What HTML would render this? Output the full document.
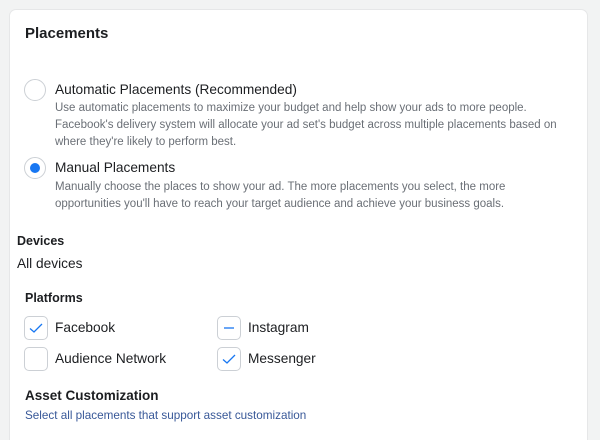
<!DOCTYPE html>
<html><head><style>
*{margin:0;padding:0;box-sizing:border-box}
html,body{width:600px;height:440px;overflow:hidden}
body{background:#f2f3f3;font-family:"Liberation Sans",sans-serif;position:relative;color:#1c1e21}
.card{position:absolute;left:9px;top:9px;width:579px;height:431px;background:#fff;border-radius:7px 7px 0 0;border:1px solid #e6e7e8;border-bottom:none}
.a{position:absolute;white-space:nowrap}
.t{font-weight:bold}
.d{font-size:11.5px;color:#6a6f76;line-height:17px}
.r{position:absolute;width:22px;height:22px;border-radius:50%;border:1px solid #ccd0d5;background:#fff}
.cb{position:absolute;width:24px;height:24px;border-radius:5px;border:1px solid #ccd0d5;background:#fff}
.cb svg{position:absolute;left:4px;top:4px}
.l{font-size:13.7px;line-height:16px}
</style></head><body>
<div class="card"></div>
<div class="a t" style="left:25px;top:25px;font-size:15px">Placements</div>
<div class="r" style="left:24px;top:79px"></div>
<div class="a l" style="left:55px;top:82px">Automatic Placements (Recommended)</div>
<div class="a d" style="left:55px;top:100px">Use automatic placements to maximize your budget and help show your ads to more people.<br>Facebook's delivery system will allocate your ad set's budget across multiple placements based on<br>where they're likely to perform best.</div>
<div class="r" style="left:24px;top:157px"><div style="position:absolute;left:5px;top:5px;width:10px;height:10px;border-radius:50%;background:#1877f2"></div></div>
<div class="a l" style="left:55px;top:160px">Manual Placements</div>
<div class="a d" style="left:55px;top:179px">Manually choose the places to show your ad. The more placements you select, the more<br>opportunities you'll have to reach your target audience and achieve your business goals.</div>
<div class="a t" style="left:17px;top:234px;font-size:12.5px">Devices</div>
<div class="a" style="left:17px;top:256px;font-size:13.7px">All devices</div>
<div class="a t" style="left:25px;top:291px;font-size:12.5px">Platforms</div>
<div class="cb" style="left:24px;top:316px"><svg width="14" height="14"><path d="M1 7.5 L5 11 L13 3" stroke="#1877f2" stroke-width="1.3" fill="none"/></svg></div>
<div class="a l" style="left:55px;top:320px">Facebook</div>
<div class="cb" style="left:24px;top:347px"></div>
<div class="a l" style="left:55px;top:351px">Audience Network</div>
<div class="cb" style="left:217px;top:316px"><svg width="14" height="14"><path d="M2 7 H12" stroke="#1877f2" stroke-width="1.3"/></svg></div>
<div class="a l" style="left:248px;top:320px">Instagram</div>
<div class="cb" style="left:217px;top:347px"><svg width="14" height="14"><path d="M1 7.5 L5 11 L13 3" stroke="#1877f2" stroke-width="1.3" fill="none"/></svg></div>
<div class="a l" style="left:248px;top:351px">Messenger</div>
<div class="a t" style="left:25px;top:388px;font-size:13.5px">Asset Customization</div>
<div class="a" style="left:25px;top:409px;font-size:11.7px;color:#385898">Select all placements that support asset customization</div>
</body></html>
